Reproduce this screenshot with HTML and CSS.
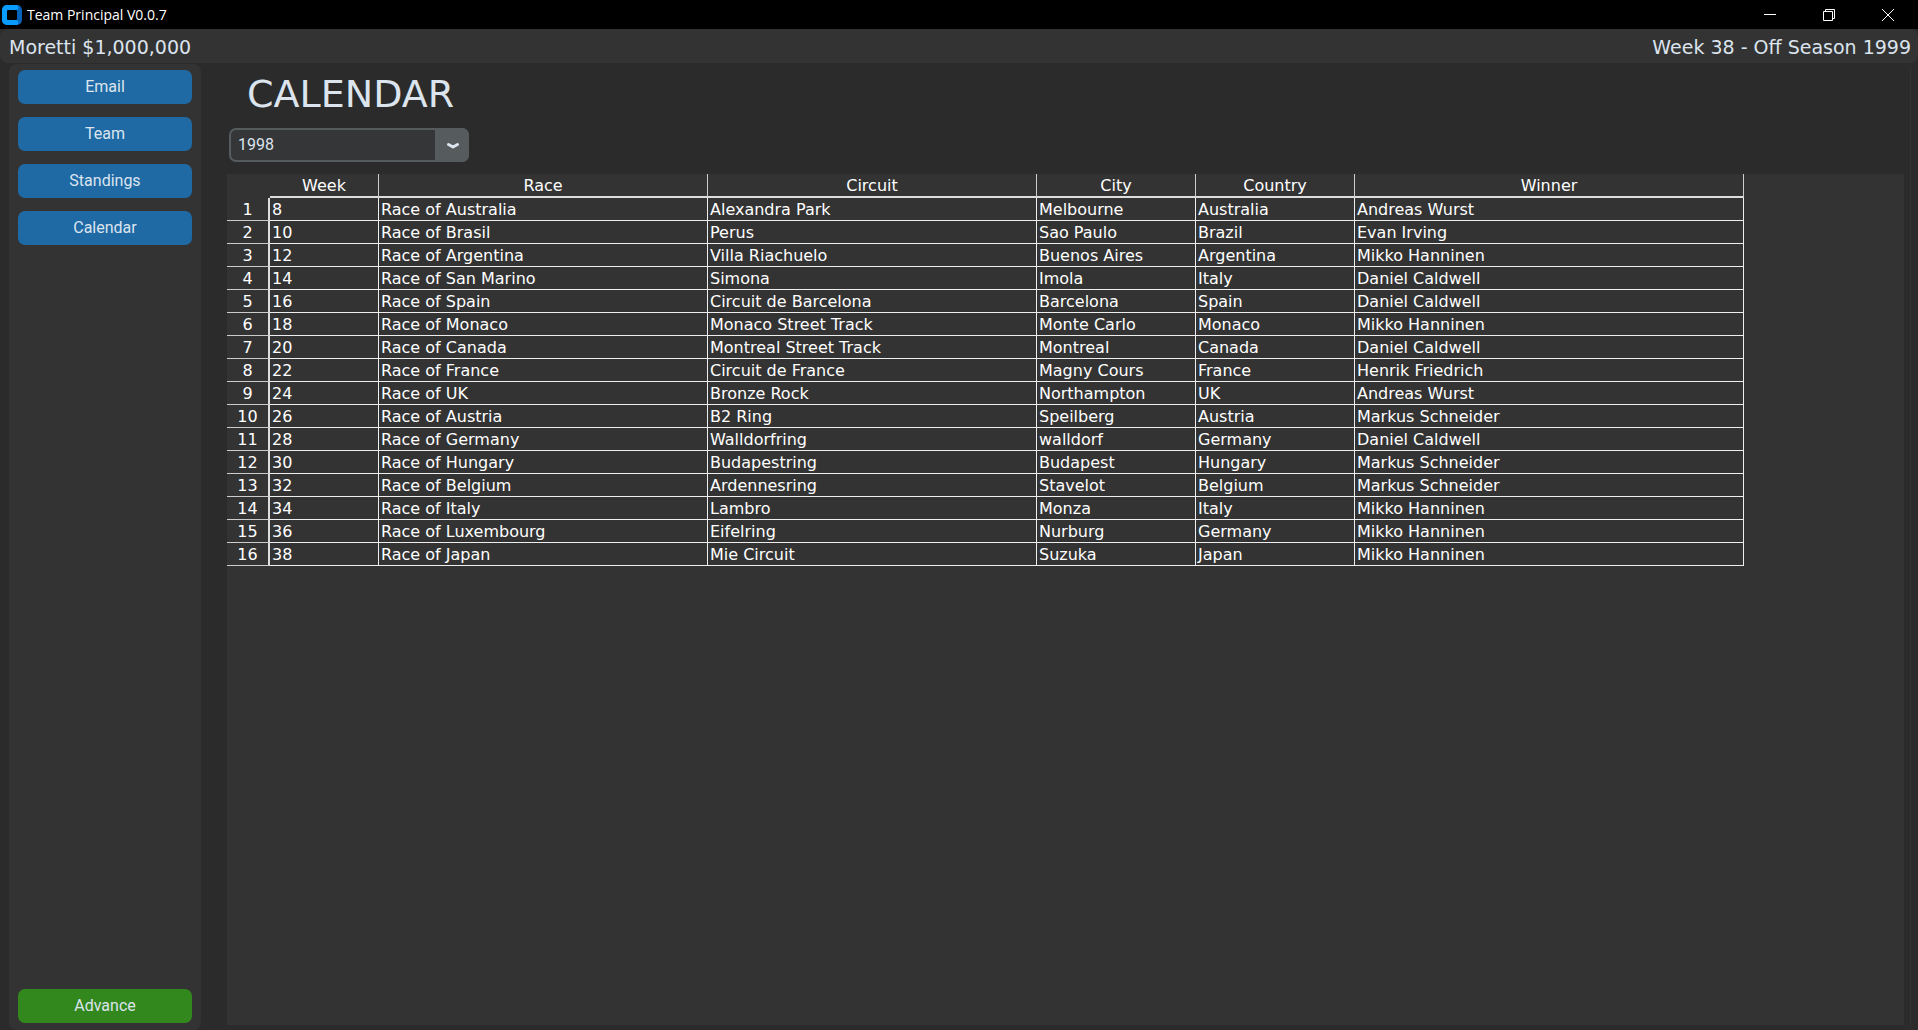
FILE: index.html
```html
<!DOCTYPE html>
<html lang="en">
<head>
<meta charset="utf-8">
<title>Team Principal V0.0.7</title>
<link rel="stylesheet" href="styles.css">
</head>
<body>
<header class="titlebar">
  <svg class="logo" viewBox="0 0 20 20" aria-hidden="true">
    <rect width="20" height="20" rx="5" fill="#0563b8"/>
    <path d="M5 0h9a2.500 2.500 0 0 1 0 5H6a1 1 0 0 0-1 1v8a1 1 0 0 0 1 1h8a2.500 2.500 0 0 1 0 5H5a5 5 0 0 1-5-5V5a5 5 0 0 1 5-5z" fill="#0a9bff"/>
    <rect x="5" y="5" width="10" height="10" rx="1" fill="#000"/>
  </svg>
  <span class="app-name">Team Principal V0.0.7</span>
  <div class="window-buttons">
    <button type="button" aria-label="Minimize"><svg viewBox="0 0 12 12"><path d="M0 5.500h12"/></svg></button>
    <button type="button" aria-label="Restore"><svg viewBox="0 0 12 12"><path d="M.5 2.500h9v9h-9zM2.500 2.500V.5h9v9h-2"/></svg></button>
    <button type="button" aria-label="Close"><svg viewBox="0 0 12 12"><path d="M0 0l12 12M12 0L0 12"/></svg></button>
  </div>
</header>
<div class="status">
  <span>Moretti $1,000,000</span>
  <span>Week 38 - Off Season 1999</span>
</div>
<div class="body">
  <nav class="sidebar">
    <button type="button">Email</button>
    <button type="button">Team</button>
    <button type="button">Standings</button>
    <button type="button">Calendar</button>
    <button type="button" class="advance">Advance</button>
  </nav>
  <main class="page">
    <h1>CALENDAR</h1>
    <div class="season">
      <select aria-label="Season"><option>1998</option></select>
      <svg viewBox="0 0 34 34" aria-hidden="true"><path d="M13.500 16.500L18 19l4.500-2.500"/></svg>
    </div>
    <div class="sheet">
      <table>
        <colgroup><col class="c-index"><col class="c-week"><col class="c-wide"><col class="c-wide"><col class="c-place"><col class="c-place"><col class="c-winner"></colgroup>
        <thead><tr><td></td><th>Week</th><th>Race</th><th>Circuit</th><th>City</th><th>Country</th><th>Winner</th></tr></thead>
        <tbody>
          <tr><th>1</th><td>8</td><td>Race of Australia</td><td>Alexandra Park</td><td>Melbourne</td><td>Australia</td><td>Andreas Wurst</td></tr>
          <tr><th>2</th><td>10</td><td>Race of Brasil</td><td>Perus</td><td>Sao Paulo</td><td>Brazil</td><td>Evan Irving</td></tr>
          <tr><th>3</th><td>12</td><td>Race of Argentina</td><td>Villa Riachuelo</td><td>Buenos Aires</td><td>Argentina</td><td>Mikko Hanninen</td></tr>
          <tr><th>4</th><td>14</td><td>Race of San Marino</td><td>Simona</td><td>Imola</td><td>Italy</td><td>Daniel Caldwell</td></tr>
          <tr><th>5</th><td>16</td><td>Race of Spain</td><td>Circuit de Barcelona</td><td>Barcelona</td><td>Spain</td><td>Daniel Caldwell</td></tr>
          <tr><th>6</th><td>18</td><td>Race of Monaco</td><td>Monaco Street Track</td><td>Monte Carlo</td><td>Monaco</td><td>Mikko Hanninen</td></tr>
          <tr><th>7</th><td>20</td><td>Race of Canada</td><td>Montreal Street Track</td><td>Montreal</td><td>Canada</td><td>Daniel Caldwell</td></tr>
          <tr><th>8</th><td>22</td><td>Race of France</td><td>Circuit de France</td><td>Magny Cours</td><td>France</td><td>Henrik Friedrich</td></tr>
          <tr><th>9</th><td>24</td><td>Race of UK</td><td>Bronze Rock</td><td>Northampton</td><td>UK</td><td>Andreas Wurst</td></tr>
          <tr><th>10</th><td>26</td><td>Race of Austria</td><td>B2 Ring</td><td>Speilberg</td><td>Austria</td><td>Markus Schneider</td></tr>
          <tr><th>11</th><td>28</td><td>Race of Germany</td><td>Walldorfring</td><td>walldorf</td><td>Germany</td><td>Daniel Caldwell</td></tr>
          <tr><th>12</th><td>30</td><td>Race of Hungary</td><td>Budapestring</td><td>Budapest</td><td>Hungary</td><td>Markus Schneider</td></tr>
          <tr><th>13</th><td>32</td><td>Race of Belgium</td><td>Ardennesring</td><td>Stavelot</td><td>Belgium</td><td>Markus Schneider</td></tr>
          <tr><th>14</th><td>34</td><td>Race of Italy</td><td>Lambro</td><td>Monza</td><td>Italy</td><td>Mikko Hanninen</td></tr>
          <tr><th>15</th><td>36</td><td>Race of Luxembourg</td><td>Eifelring</td><td>Nurburg</td><td>Germany</td><td>Mikko Hanninen</td></tr>
          <tr><th>16</th><td>38</td><td>Race of Japan</td><td>Mie Circuit</td><td>Suzuka</td><td>Japan</td><td>Mikko Hanninen</td></tr>
        </tbody>
      </table>
    </div>
  </main>
</div>
</body>
</html>
```
FILE: styles.css
```css
* { box-sizing: border-box; }

body {
  margin: 0;
  min-height: 100vh;
  display: flex;
  flex-direction: column;
  background: #2b2b2b;
  color: #dce4ee;
  font-family: "DejaVu Sans", Verdana, sans-serif;
}

button, select { font: 16px/20px Roboto, sans-serif; color: inherit; border: 0; margin: 0; }

.titlebar {
  display: flex;
  align-items: center;
  height: 29px;
  padding: 0 1px 0 2px;
  background: #000;
  color: #fff;
}
.logo { width: 20px; height: 20px; }
.app-name { margin-left: 5px; font: 14px/20px "Open Sans", "Segoe UI", sans-serif; }
.window-buttons { display: flex; margin-left: auto; }
.window-buttons button {
  display: grid;
  place-items: center;
  width: 59px;
  height: 29px;
  padding: 0;
  background: none;
}
.window-buttons svg { width: 12px; height: 12px; fill: none; stroke: #fff; stroke-width: 1; }

.status {
  display: flex;
  justify-content: space-between;
  align-items: center;
  height: 34px;
  padding: 2px 7px 0 9px;
  background: #333;
  border-radius: 8px;
  font-size: 19px;
  line-height: 24px;
}

.body { flex: 1; display: flex; gap: 19px; padding: 1px 7px 0 9px; }

.sidebar {
  display: flex;
  flex-direction: column;
  gap: 13px;
  width: 192px;
  padding: 6px 9px 7px;
  background: #333;
  border-radius: 8px;
}
.sidebar button { height: 34px; padding: 0; border-radius: 7px; background: #1f6aa5; }
.sidebar .advance { margin-top: auto; background: #33881d; }

.page {
  flex: 1;
  min-width: 0;
  display: flex;
  flex-direction: column;
  padding: 6px 6px 5px 7px;
  border-right: 1px solid #333;
  border-radius: 0 8px 8px 0;
}
h1 { margin: 0 0 10px 20px; font-size: 38px; line-height: 48px; font-weight: 400; }

.season { display: grid; width: 240px; margin: 0 0 12px 2px; }
.season select {
  grid-area: 1 / 1;
  appearance: none;
  height: 34px;
  padding: 0 34px 0 7px;
  border: 2px solid #565b5e;
  border-radius: 7px;
  background: #343638;
}
.season svg {
  grid-area: 1 / 1;
  justify-self: end;
  width: 34px;
  height: 34px;
  border-radius: 0 7px 7px 0;
  background: #565b5e;
  fill: none;
  stroke: #dce4ee;
  stroke-width: 3;
  stroke-linecap: round;
  stroke-linejoin: round;
  pointer-events: none;
}

.sheet { flex: 1; background: #333; overflow: auto; }
table {
  width: 1517px;
  table-layout: fixed;
  border-collapse: separate;
  border-spacing: 0;
  color: #fff;
  font-size: 16px;
  line-height: 20px;
}
.c-index { width: 43px; }
.c-week { width: 109px; }
.c-wide { width: 329px; }
.c-place { width: 159px; }
.c-winner { width: 389px; }
td, th { padding: 2px 0 0; font-weight: 400; white-space: nowrap; }
thead th { border-right: 1px solid #ccc; border-bottom: 2px solid #ddd; }
tbody td { padding-left: 2px; border-right: 1px solid #eee; border-bottom: 1px solid #eee; }
tbody th { border-right: 2px solid #ddd; border-bottom: 1px solid #ccc; }
```
